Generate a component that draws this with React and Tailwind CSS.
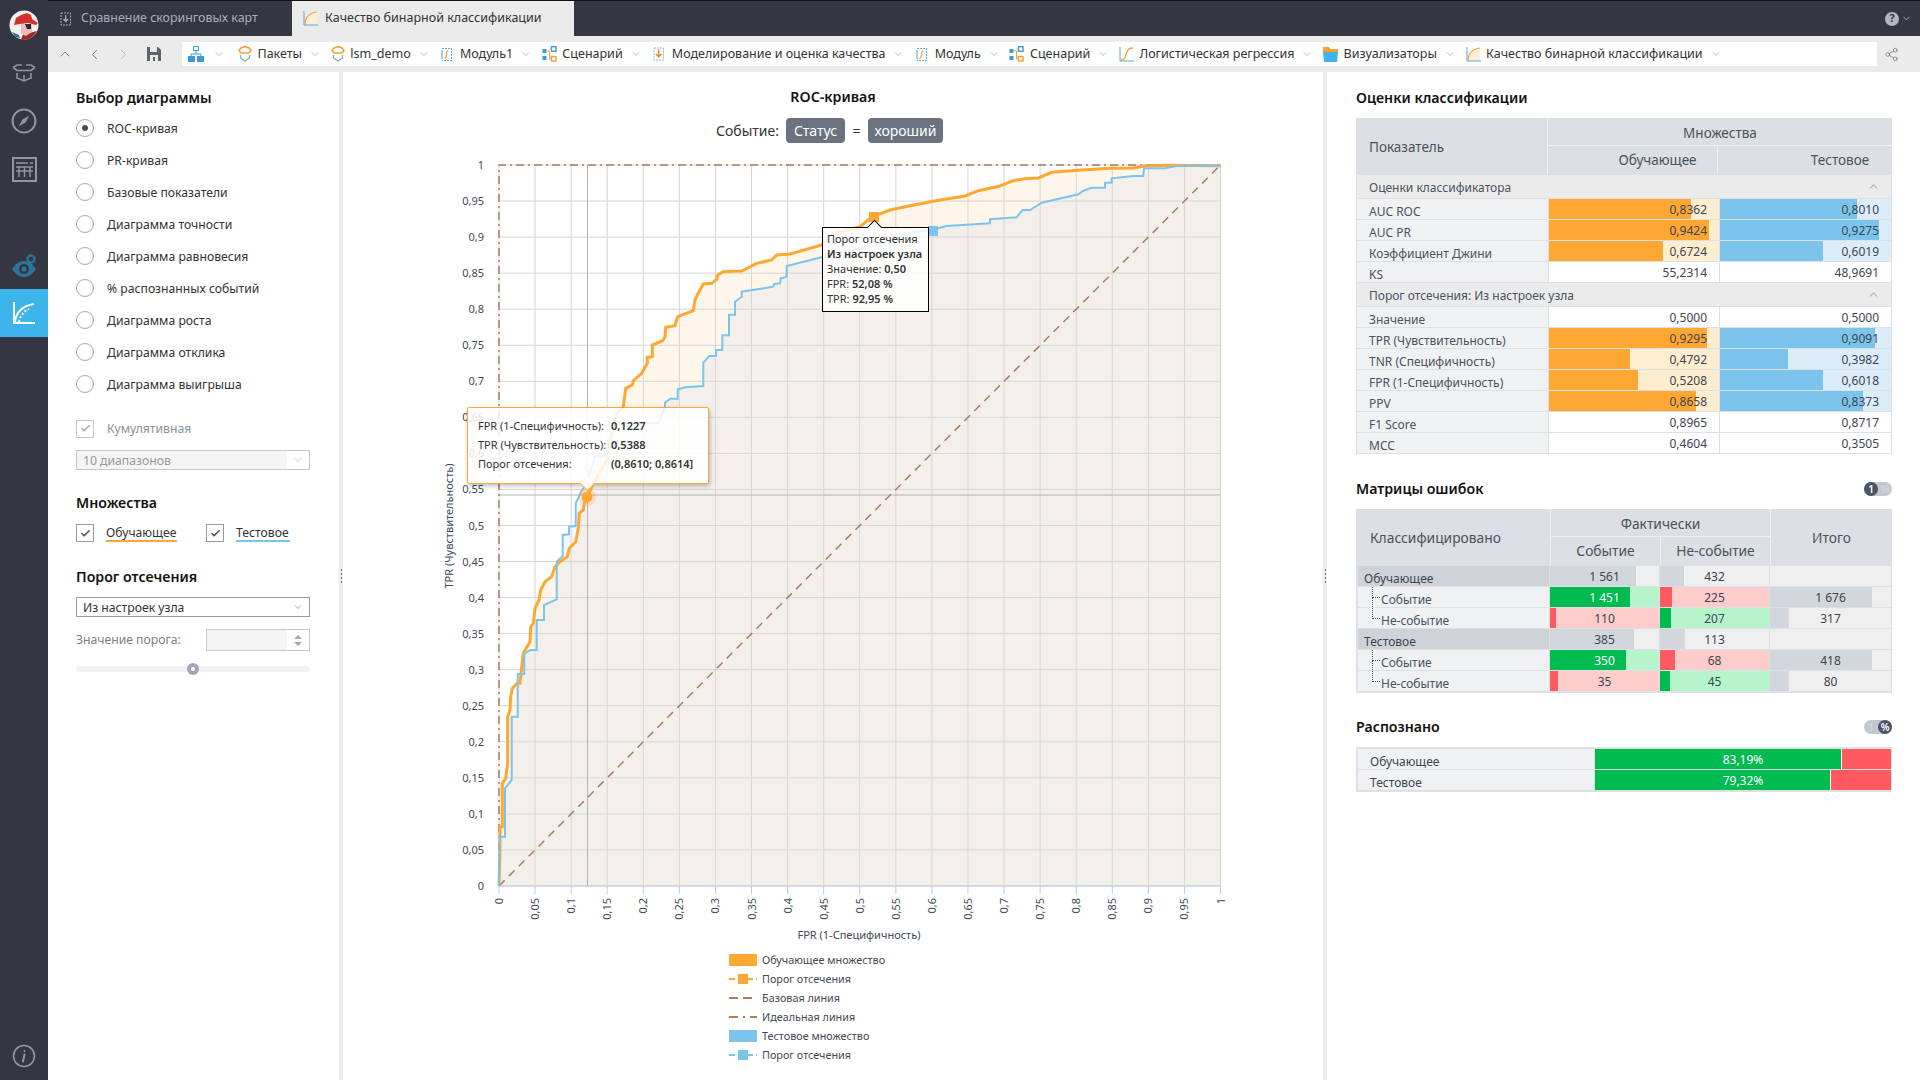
import { ChevronDown, ChevronUp, ChevronLeft, ChevronRight, Share2, Check } from "lucide-react";

const CHARTS = ["ROC-кривая", "PR-кривая", "Базовые показатели", "Диаграмма точности", "Диаграмма равновесия", "% распознанных событий", "Диаграмма роста", "Диаграмма отклика", "Диаграмма выигрыша"];

const px = (v) => 499 + 721.5 * v;
const py = (v) => 886 - 721 * v;

// curves were read off the picture in zoomed coordinates
const fromLow = (p) => p.map(([x, y]) => [440 + x / 3, 400 + y / 3]);
const fromMid = (p) => p.map(([x, y]) => [440 + x / 3, 140 + y / 3]);
const fromTop = (p) => p.map(([x, y]) => [800 + x / 3, 140 + y / 3]);

const orangeCurve = [
  ...fromLow([[177, 1458], [180, 1350], [180, 1280], [187, 1280], [187, 1150], [197, 1135], [203, 1090], [203, 950], [210, 930], [212, 890], [217, 865], [232, 850], [240, 850], [250, 760], [270, 725], [272, 680], [280, 670], [285, 625], [297, 600], [302, 570], [315, 545], [335, 530], [345, 500], [360, 485], [382, 470], [388, 445], [407, 425], [415, 385], [418, 340], [430, 330], [433, 310], [440, 290], [458, 255]]),
  ...fromMid([[500, 960], [515, 880], [530, 820], [550, 800], [557, 745], [577, 735], [580, 722], [605, 700], [622, 670], [622, 652], [637, 650], [637, 615], [668, 602], [675, 590], [677, 562], [705, 557], [713, 530], [760, 512], [765, 480], [772, 465], [790, 432], [815, 430], [830, 418], [833, 405], [850, 395], [905, 393], [950, 370], [995, 360], [1010, 345], [1050, 342], [1145, 315], [1180, 280], [1260, 260], [1290, 235]]),
  ...fromTop([[222, 228], [270, 210], [330, 197], [420, 180], [495, 168], [535, 152], [600, 138], [640, 122], [675, 116], [715, 114], [755, 97], [845, 90], [930, 85], [1000, 84], [1035, 78], [1100, 76], [1262, 77]]),
];

const blueCurve = [
  ...fromLow([[177, 1458], [180, 1310], [195, 1310], [195, 1165], [215, 1140], [215, 950], [233, 950], [233, 822], [253, 822], [253, 760], [272, 750], [290, 750], [290, 660], [312, 660], [312, 615], [350, 598], [350, 485], [368, 468], [368, 405], [387, 403], [387, 380], [407, 378], [407, 310], [425, 272]]),
  ...fromMid([[440, 1030], [465, 950], [500, 945], [510, 890], [525, 850], [655, 850], [675, 800], [675, 788], [690, 776], [713, 776], [713, 748], [735, 742], [790, 738], [790, 668], [808, 648], [828, 648], [828, 630], [847, 630], [847, 586], [867, 586], [867, 524], [885, 524], [885, 485], [905, 470], [905, 455], [1000, 440], [1003, 432], [1020, 430], [1022, 415], [1040, 410], [1040, 378], [1150, 350], [1210, 335], [1330, 310], [1420, 275], [1475, 270]]),
  ...fromTop([[415, 265], [438, 258], [570, 250], [570, 238], [610, 235], [650, 232], [668, 210], [690, 210], [725, 188], [835, 163], [850, 152], [875, 143], [915, 143], [915, 128], [935, 128], [935, 115], [1000, 108], [1030, 108], [1032, 85], [1095, 85], [1130, 78], [1262, 77]]),
];

const toPoints = (p) => p.map(([x, y]) => `${x.toFixed(1)},${y.toFixed(1)}`).join(" ");
const tickLabel = (i) => String(Number((i * 0.05).toFixed(2))).replace(".", ",");
const ticks = Array.from({ length: 21 }, (_, i) => i);

function ItemIcon({ type }) {
  if (type === "tree") {
    return (
      <svg width="16" height="16" viewBox="0 0 16 16" className="shrink-0">
        <rect x="5.500" y="0.500" width="5" height="4" fill="#fff" stroke="#3a9bd9" />
        <path d="M8 5v3M3 8h10M3 8v2M13 8v2" stroke="#3a9bd9" fill="none" />
        <rect x="0" y="10" width="7" height="6" fill="#3a9bd9" />
        <rect x="9" y="10" width="7" height="6" fill="#3a9bd9" />
      </svg>
    );
  }
  if (type === "pkg") {
    return (
      <svg width="14" height="16" viewBox="0 0 14 16" className="shrink-0" fill="none">
        <path d="M3 2l4-1.500L11 2l2 2.500L11 7H3L1 4.500z" stroke="#f5a033" strokeWidth="1.600" />
        <path d="M2.500 9v3l4.500 3 4.500-3V9" stroke="#7fa8c9" strokeWidth="1.200" />
      </svg>
    );
  }
  if (type === "func") {
    return (
      <svg width="15" height="15" viewBox="0 0 15 15" className="shrink-0" fill="none">
        <path d="M3 1.500h9.500v12H3" stroke="#5aa9dc" strokeWidth="1.100" strokeDasharray="2 1" />
        <path d="M3 3v9" stroke="#5aa9dc" strokeWidth="1.100" />
        <path d="M9.500 4C8 3.500 7.800 5 7.500 7.500S6.500 11.500 5.500 11" stroke="#f5a033" strokeWidth="1.200" />
      </svg>
    );
  }
  if (type === "flow") {
    return (
      <svg width="15" height="16" viewBox="0 0 15 16" className="shrink-0" fill="none">
        <rect x="0.500" y="3" width="4" height="4" fill="#3a9bd9" />
        <rect x="0.500" y="10" width="4" height="4" fill="#3a9bd9" />
        <rect x="9.500" y="0.700" width="4.500" height="4.500" stroke="#3a9bd9" strokeWidth="1.400" />
        <rect x="9.500" y="10.500" width="4.500" height="4.500" stroke="#f5a033" strokeWidth="1.400" />
        <path d="M4.500 5h3v8h2M7.500 3h2" stroke="#f5a033" />
      </svg>
    );
  }
  if (type === "model") {
    return (
      <svg width="15" height="16" viewBox="0 0 15 16" className="shrink-0" fill="none">
        <path d="M3 2h9.500v12H3z" stroke="#8bb8d8" strokeDasharray="2 1" />
        <path d="M7.700 3.500v7M5 8l2.700 3L10.500 8" stroke="#f08a1d" strokeWidth="1.500" />
      </svg>
    );
  }
  if (type === "logit") {
    return (
      <svg width="15" height="15" viewBox="0 0 15 15" className="shrink-0" fill="none">
        <path d="M1 0v14h14" stroke="#5aa9dc" />
        <path d="M2 13c4 0 4-3 5.500-7S10 1 14 1" stroke="#f5a033" strokeWidth="1.300" />
      </svg>
    );
  }
  if (type === "folder") {
    return (
      <svg width="15" height="15" viewBox="0 0 15 15" className="shrink-0">
        <path d="M0 0h6l1.500 2H15v3H0z" fill="#f5a033" />
        <path d="M0 5h15l-1 10H1z" fill="#3db4ea" />
      </svg>
    );
  }
  return (
    <svg width="15" height="15" viewBox="0 0 15 15" className="shrink-0" fill="none">
      <path d="M2 14C2 7 6 2 14 1v13z" fill="#fdeed8" />
      <path d="M1 0v14h14" stroke="#5aa9dc" />
      <path d="M2 14C2 7 6 2 14 1" stroke="#f5a033" strokeWidth="1.200" />
    </svg>
  );
}

const CRUMBS = [
  ["pkg", "Пакеты"],
  ["pkg", "lsm_demo"],
  ["func", "Модуль1"],
  ["flow", "Сценарий"],
  ["model", "Моделирование и оценка качества"],
  ["func", "Модуль"],
  ["flow", "Сценарий"],
  ["logit", "Логистическая регрессия"],
  ["folder", "Визуализаторы"],
  ["roc", "Качество бинарной классификации"],
];

function Sidebar() {
  return (
    <div className="w-12 shrink-0 bg-[#343642] flex flex-col items-center relative">
      <svg width="30" height="30" viewBox="0 0 30 30" className="mt-[10px]">
        <circle cx="15" cy="15" r="14.500" fill="#f4f1ee" />
        <path d="M12 29.500l2-5 14-3.500a14.500 14.500 0 0 1-16 8.500z" fill="#a8232b" />
        <path d="M12 14h11v8l-6 4-5-2z" fill="#f0bcb8" />
        <path d="M16 14h6v5h-4z" fill="#2b2b33" />
        <path d="M5 15l2-7 5-3 6-2 4 2 1 4 6 4-2 2-8-2-8 1z" fill="#d42f2f" />
        <path d="M3 22l7 3 1 3-5-1z" fill="#3c6f8c" />
      </svg>
      <svg width="24" height="18" viewBox="0 0 24 18" fill="none" stroke="#8f95a3" strokeWidth="1.600" className="mt-[24px]">
        <path d="M1 3.500l4-2.500h5M23 3.500l-4-2.500h-5M1 3.500L5 6.500h14l4-3" />
        <path d="M5 9v5l7 3 7-3V9M12 11v6" />
      </svg>
      <svg width="26" height="26" viewBox="0 0 26 26" fill="none" className="mt-[26px]">
        <circle cx="13" cy="13" r="11.500" stroke="#8f95a3" strokeWidth="2" />
        <path d="M18.500 7.500L14.500 14.500 7.500 18.500 11.500 11.500z" fill="#8f95a3" />
      </svg>
      <svg width="25" height="25" viewBox="0 0 25 25" fill="none" stroke="#8f95a3" className="mt-[23px]">
        <rect x="1" y="1" width="23" height="23" strokeWidth="2" />
        <path d="M4 6h17" strokeWidth="1.500" strokeDasharray="12 2 3" />
        <path d="M4 10h17M7 10v10M12.500 10v10M18 10v10M4 14h17" strokeWidth="1.500" />
      </svg>
      <svg width="26" height="24" viewBox="0 0 26 24" className="mt-[72px]">
        <path d="M1 15c3-5 7-8 12-8s9 3 12 8c-3 5-7 8-12 8S4 20 1 15z" fill="#2f7299" />
        <circle cx="13" cy="15" r="5" fill="#343642" />
        <circle cx="13" cy="15" r="2.500" fill="#2f7299" />
        <circle cx="20" cy="5" r="3.500" fill="none" stroke="#2f7299" strokeWidth="2.500" />
      </svg>
      <div className="mt-[11px] w-12 h-12 bg-[#3db4ea] flex items-center justify-center">
        <svg width="22" height="22" viewBox="0 0 22 22" fill="none" stroke="#fff">
          <path d="M1 0v21h21" strokeWidth="2" />
          <path d="M2 20C3 11 9 4 21 2" strokeWidth="2" />
          <path d="M6 20C7 14 11 9 16 7" strokeWidth="2" strokeDasharray="2 2" />
        </svg>
      </div>
      <svg width="24" height="24" viewBox="0 0 24 24" fill="none" className="absolute bottom-[12px] left-3">
        <circle cx="12" cy="12" r="10.500" stroke="#8f95a3" strokeWidth="1.600" />
        <path d="M12.500 7v.1M12.500 10.500L11 17.500" stroke="#8f95a3" strokeWidth="2" strokeLinecap="round" />
      </svg>
    </div>
  );
}

function TopBars() {
  return (
    <div className="shrink-0">
      <div className="h-9 bg-[#343642] flex border-t border-[#111]">
        <div className="w-[244px] flex items-center pl-[10px] text-[#a9aeb9] text-[12.400px]">
          <svg width="15" height="16" viewBox="0 0 15 16" fill="none" stroke="#a9aeb9" className="mr-2">
            <path d="M3 2h9.500v12H3z" strokeDasharray="2 1" />
            <path d="M7.700 4v6M5.500 8l2.200 2.500L10 8" strokeWidth="1.300" />
          </svg>
          Сравнение скоринговых карт
        </div>
        <div className="w-[282px] bg-[#ebebeb] flex items-center pl-[11px] text-[#333] text-[12.500px]">
          <span className="mr-[7px] flex"><ItemIcon type="roc" /></span>
          Качество бинарной классификации
        </div>
        <div className="flex-1 flex items-center justify-end pr-2 gap-[2px]">
          <div className="w-[14px] h-[14px] rounded-full bg-[#b3b7c0] text-[#343642] text-[11px] font-bold flex items-center justify-center">?</div>
          <ChevronDown size={11} className="text-[#b3b7c0]" />
        </div>
      </div>
      <div className="h-9 bg-[#ebebeb] flex items-center">
        <div className="w-[134px] flex items-center text-[#777] pl-[9px]">
          <ChevronUp size={16} strokeWidth={1.300} />
          <ChevronLeft size={17} strokeWidth={1.300} className="ml-[13px]" />
          <ChevronRight size={17} strokeWidth={1.300} className="ml-[12px] text-[#b5b8bd]" />
          <svg width="14" height="14" viewBox="0 0 14 14" className="ml-[15px]">
            <path d="M0 0h11l3 3v11H0z" fill="#5d6470" />
            <rect x="3" y="0" width="7" height="5" fill="#ebebeb" />
            <rect x="3" y="8" width="8" height="6" fill="#ebebeb" />
            <rect x="6" y="10" width="2" height="4" fill="#5d6470" />
          </svg>
        </div>
        <div className="w-[1695px] h-6 bg-white flex items-center pl-[6px] text-[12.500px] text-[#333]">
          <ItemIcon type="tree" />
          <ChevronDown size={12} strokeWidth={1.200} className="ml-[9px] mr-[13px] text-[#8a8f99]" />
          {CRUMBS.map(([icon, name], i) => (
            <div key={i} className="flex items-center whitespace-nowrap">
              <ItemIcon type={icon} />
              <span className="ml-[5.500px] pt-px">{name}</span>
              <ChevronDown size={12} strokeWidth={1.200} className="ml-[7px] mr-[9.700px] text-[#8a8f99]" />
            </div>
          ))}
        </div>
        <Share2 size={15} strokeWidth={1.200} className="ml-[7px] text-[#777]" />
      </div>
    </div>
  );
}

function Heading({ children, className = "" }) {
  return <div className={"h-5 flex items-center text-[14.200px] font-semibold text-[#111] " + className}>{children}</div>;
}

function CheckBox({ muted }) {
  return (
    <div className={"w-[18px] h-[18px] border flex items-center justify-center shrink-0 " + (muted ? "border-[#c8c8c8]" : "border-[#9b9b9b]")}>
      <Check size={11} strokeWidth={3.500} className={muted ? "text-[#a9a9a9]" : "text-[#555]"} />
    </div>
  );
}

function LeftPanel() {
  return (
    <div className="w-[291px] shrink-0 bg-white px-7 pt-4">
      <Heading>Выбор диаграммы</Heading>
      <div className="mt-1 flex flex-col">
        {CHARTS.map((name, i) => (
          <div key={name} className="h-8 flex items-center text-[12.200px] text-[#333]">
            <div className="w-[18px] h-[18px] rounded-full border border-[#a8a8a8] flex items-center justify-center mr-[13px]">
              {i === 0 && <div className="w-[6px] h-[6px] rounded-full bg-[#4a4f5a]" />}
            </div>
            <span className="pt-[3px]">{name}</span>
          </div>
        ))}
      </div>
      <div className="mt-[19px] flex items-center text-[12.200px] text-[#8a8f99]">
        <CheckBox muted />
        <span className="ml-[13px] pt-px">Кумулятивная</span>
      </div>
      <div className="mt-[12px] w-[234px] h-5 border border-[#c8c8c8] flex text-[12.200px] text-[#999]">
        <div className="flex-1 bg-[#f5f5f5] pl-[6px] flex items-center pt-[2px]">10 диапазонов</div>
        <div className="w-[22px] flex items-center justify-center"><ChevronDown size={12} strokeWidth={1.200} className="text-[#aaa]" /></div>
      </div>
      <Heading className="mt-[22px]">Множества</Heading>
      <div className="mt-3 flex text-[12.200px] text-[#333]">
        <CheckBox />
        <span className="ml-3 w-[71px] h-[18px] border-b-2 border-[#ffa733] leading-[17px] whitespace-nowrap">Обучающее</span>
        <div className="ml-[29px]"><CheckBox /></div>
        <span className="ml-3 w-[54px] h-[18px] border-b-2 border-[#7cc4ec] leading-[17px] whitespace-nowrap">Тестовое</span>
      </div>
      <Heading className="mt-[24px]">Порог отсечения</Heading>
      <div className="mt-[11px] w-[234px] h-5 border border-[#9b9b9b] flex text-[12.200px] text-[#333]">
        <div className="flex-1 pl-[6px] flex items-center pt-[2px]">Из настроек узла</div>
        <div className="w-[22px] flex items-center justify-center"><ChevronDown size={12} strokeWidth={1.200} className="text-[#777]" /></div>
      </div>
      <div className="mt-3 flex items-center text-[12.200px] text-[#7b808a]">
        <span className="w-[130px]">Значение порога:</span>
        <div className="w-[104px] h-[22px] border border-[#c8c8c8] flex">
          <div className="flex-1 bg-[#f5f5f5]" />
          <div className="w-[22px] flex flex-col items-center justify-center gap-[3px]">
            <div className="w-0 h-0 border-x-[4px] border-x-transparent border-b-[4px] border-b-[#aaa]" />
            <div className="w-0 h-0 border-x-[4px] border-x-transparent border-t-[4px] border-t-[#aaa]" />
          </div>
        </div>
      </div>
      <div className="mt-[15px] w-[234px] h-[6px] rounded-full bg-[#f2f2f2] flex items-center justify-center">
        <div className="w-3 h-3 rounded-full bg-[#9ea7b3] flex items-center justify-center">
          <div className="w-1 h-1 rounded-full bg-white" />
        </div>
      </div>
    </div>
  );
}

function Gutter() {
  return (
    <div className="w-1 shrink-0 flex flex-col items-center justify-center gap-[2px]">
      <div className="w-[1px] h-[2px] bg-[#777]" />
      <div className="w-[1px] h-[2px] bg-[#777]" />
      <div className="w-[1px] h-[2px] bg-[#777]" />
      <div className="w-[1px] h-[2px] bg-[#777]" />
    </div>
  );
}

function Chart() {
  const left = px(0);
  const right = px(1);
  const top = py(1);
  const bottom = py(0);
  const closed = (p) => toPoints([...p, [right, bottom], [left, bottom]]);
  const legendY = [960, 979, 998, 1017, 1036, 1055];
  const legendText = ["Обучающее множество", "Порог отсечения", "Базовая линия", "Идеальная линия", "Тестовое множество", "Порог отсечения"];

  return (
    <svg width="980" height="930" viewBox="343 150 980 930" className="block">
      <polygon points={closed(orangeCurve)} fill="#ffa733" fillOpacity="0.1" />
      <polygon points={closed(blueCurve)} fill="#87baf4" fillOpacity="0.1" />
      {ticks.map((i) => (
        <g key={i}>
          <line x1={left} x2={right} y1={py(i * 0.05)} y2={py(i * 0.05)} stroke="#d8d6d3" />
          <line x1={px(i * 0.05)} x2={px(i * 0.05)} y1={top} y2={bottom} stroke="#d8d6d3" />
          <line x1={px(i * 0.05)} x2={px(i * 0.05)} y1={bottom} y2={bottom + 8} stroke="#b7cfe6" />
          <text x={484} y={py(i * 0.05) + 4} textAnchor="end" fontSize="11" fill="#3f4a55">{tickLabel(i)}</text>
          <text transform={`translate(${px(i * 0.05) + 4} 898) rotate(-90)`} textAnchor="end" fontSize="11" fill="#3f4a55">{tickLabel(i)}</text>
        </g>
      ))}
      <line x1={left} x2={right} y1={bottom} y2={bottom} stroke="#b7cfe6" />
      <line x1={px(0.1227)} x2={px(0.1227)} y1={top} y2={bottom} stroke="#b3b3b3" />
      <line x1={left} x2={right} y1={495} y2={495} stroke="#b3b3b3" />
      <line x1={left} x2={right} y1={bottom} y2={top} stroke="#ab7b62" strokeWidth="1.500" strokeDasharray="8 6" />
      <path d={`M${left} ${bottom}V${top}H${right}`} fill="none" stroke="#ab7b62" strokeWidth="1.500" strokeDasharray="8 4 2 4" />
      <polyline points={toPoints(orangeCurve)} fill="none" stroke="#ffa733" strokeWidth="3" />
      <polyline points={toPoints(blueCurve)} fill="none" stroke="#7cc4ec" strokeWidth="2" />
      <rect x="869" y="212" width="10" height="10" fill="#ffa733" />
      <rect x="928" y="226" width="10" height="10" fill="#7cc4ec" />
      <circle cx="587" cy="497" r="9" fill="#ffa733" fillOpacity="0.25" />
      <circle cx="587" cy="497" r="5.500" fill="#ffa733" />
      <text transform="translate(453 526) rotate(-90)" textAnchor="middle" fontSize="11" fill="#3f4a55">TPR (Чувствительность)</text>
      <text x="859" y="939" textAnchor="middle" fontSize="11" fill="#3f4a55">FPR (1-Специфичность)</text>
      {legendText.map((t, i) => (
        <text key={i} x="762" y={legendY[i] + 4} fontSize="10.800" fill="#3f4a55">{t}</text>
      ))}
      <rect x="729" y="954" width="28" height="12" fill="#ffa733" />
      <line x1="729" x2="757" y1="979" y2="979" stroke="#ffa733" strokeWidth="2" strokeDasharray="6 3" />
      <rect x="738" y="974" width="10" height="10" fill="#ffa733" />
      <line x1="729" x2="757" y1="998" y2="998" stroke="#b07a5c" strokeWidth="2" strokeDasharray="9 5" />
      <line x1="729" x2="757" y1="1017" y2="1017" stroke="#b07a5c" strokeWidth="2" strokeDasharray="9 5 2 5" />
      <rect x="729" y="1030" width="28" height="12" fill="#7cc4ec" />
      <line x1="729" x2="757" y1="1055" y2="1055" stroke="#7cc4ec" strokeWidth="2" strokeDasharray="6 3" />
      <rect x="738" y="1050" width="10" height="10" fill="#7cc4ec" />
    </svg>
  );
}

function CenterPanel() {
  return (
    <div className="w-[980px] shrink-0 bg-white pt-[15px] overflow-hidden">
      <Heading className="justify-center">ROC-кривая</Heading>
      <div className="mt-[11px] h-[25px] flex items-center text-[14px] text-[#333] pl-[373px]">
        <span className="w-[70px]">Событие:</span>
        <span className="w-[59px] h-[25px] bg-[#6c7380] text-white rounded-sm flex items-center justify-center">Статус</span>
        <span className="w-[23px] text-center">=</span>
        <span className="w-[75px] h-[25px] bg-[#6c7380] text-white rounded-sm flex items-center justify-center">хороший</span>
      </div>
      <div className="mt-[7px] relative">
        <Chart />
        <div className="absolute left-[124px] top-[257px] w-[242px] h-[77px] bg-white/85 border-[1.500px] border-[#ffa733] shadow-[1px_2px_4px_rgba(0,0,0,0.25)] rounded-[2px] px-[10px] pt-[8px] text-[11px] text-[#333] leading-[19px] whitespace-nowrap">
          <div className="flex"><span className="w-[133px]">FPR (1-Специфичность):</span><b className="font-semibold">0,1227</b></div>
          <div className="flex"><span className="w-[133px]">TPR (Чувствительность):</span><b className="font-semibold">0,5388</b></div>
          <div className="flex"><span className="w-[133px]">Порог отсечения:</span><b className="font-semibold">(0,8610; 0,8614]</b></div>
          <div className="absolute left-[114px] -bottom-[6px] w-[11px] h-[11px] rotate-45 bg-white border-r-[1.500px] border-b-[1.500px] border-[#ffa733]" />
        </div>
        <div className="absolute left-[479px] top-[77px] w-[107px] h-[85px] bg-white/85 border border-black px-[4px] pt-[3px] text-[11px] text-[#333] leading-[15px] whitespace-nowrap">
          <div>Порог отсечения</div>
          <div className="font-semibold">Из настроек узла</div>
          <div>Значение: <b className="font-semibold">0,50</b></div>
          <div>FPR: <b className="font-semibold">52,08 %</b></div>
          <div>TPR: <b className="font-semibold">92,95 %</b></div>
          <div className="absolute left-[46px] -top-[6px] w-[11px] h-[11px] rotate-45 bg-white border-l border-t border-black" />
        </div>
      </div>
    </div>
  );
}

const ORANGE = ["#ffa733", "#ffedd0"];
const BLUE = ["#7cc4ec", "#dcedfa"];

function ValueCell({ value, bar, colors }) {
  return (
    <div className="relative h-5 text-right pr-[12px] leading-[21px]" style={{ backgroundColor: bar != null ? colors[1] : "#fff" }}>
      {bar != null && <div className="absolute left-0 top-0 bottom-0" style={{ width: `${bar * 100}%`, backgroundColor: colors[0] }} />}
      <span className="relative">{value}</span>
    </div>
  );
}

const SCORES = [
  { section: "Оценки классификатора" },
  { name: "AUC ROC", a: "0,8362", b: "0,8010", ab: 0.8362, bb: 0.801 },
  { name: "AUC PR", a: "0,9424", b: "0,9275", ab: 0.9424, bb: 0.9275 },
  { name: "Коэффициент Джини", a: "0,6724", b: "0,6019", ab: 0.6724, bb: 0.6019 },
  { name: "KS", a: "55,2314", b: "48,9691" },
  { section: "Порог отсечения: Из настроек узла" },
  { name: "Значение", a: "0,5000", b: "0,5000" },
  { name: "TPR (Чувствительность)", a: "0,9295", b: "0,9091", ab: 0.9295, bb: 0.9091 },
  { name: "TNR (Специфичность)", a: "0,4792", b: "0,3982", ab: 0.4792, bb: 0.3982 },
  { name: "FPR (1-Специфичность)", a: "0,5208", b: "0,6018", ab: 0.5208, bb: 0.6018 },
  { name: "PPV", a: "0,8658", b: "0,8373", ab: 0.8658, bb: 0.8373 },
  { name: "F1 Score", a: "0,8965", b: "0,8717" },
  { name: "MCC", a: "0,4604", b: "0,3505" },
];

function ScoresTable() {
  return (
    <div className="w-[536px] text-[12px] text-[#4a5360]">
      <div className="grid grid-cols-[192px_170px_174px] grid-rows-[28px_28px] bg-[#dcdfe3] h-[56px] text-[13.500px]">
        <div className="row-span-2 flex items-center pl-[13px] border-r border-[#eef0f2] pt-[2px]">Показатель</div>
        <div className="col-span-2 flex items-center justify-center border-b border-[#eef0f2] pt-[4px]">Множества</div>
        <div className="flex items-center justify-center border-r border-[#eef0f2] pl-[50px] pt-px">Обучающее</div>
        <div className="flex items-center justify-center pl-[70px] pt-px">Тестовое</div>
      </div>
      <div className="bg-[#dde0e4] flex flex-col gap-px p-px">
        {SCORES.map((r) =>
          r.section ? (
            <div key={r.section} className="h-[23px] bg-[#ebebeb] flex items-center pl-3 pr-[11px] justify-between pt-[2px]">
              {r.section}
              <ChevronUp size={13} strokeWidth={1.200} className="text-[#666] -mt-[2px]" />
            </div>
          ) : (
            <div key={r.name} className="grid grid-cols-[191px_170px_171px] grid-rows-[20px] gap-px h-5 text-[#3d4550]">
              <div className="bg-[#f0f1f3] pl-3 pt-[5px] leading-[15px] text-[#4a5360]">{r.name}</div>
              <ValueCell value={r.a} bar={r.ab} colors={ORANGE} />
              <ValueCell value={r.b} bar={r.bb} colors={BLUE} />
            </div>
          )
        )}
      </div>
    </div>
  );
}

function MatrixCell({ value, bar, dark, light, invert }) {
  return (
    <div className="relative h-5 text-center leading-[21px]" style={{ backgroundColor: light }}>
      {bar != null && <div className="absolute left-0 top-0 bottom-0" style={{ width: `${bar * 100}%`, backgroundColor: dark }} />}
      <span className={"relative" + (invert ? " text-white" : "")}>{value}</span>
    </div>
  );
}

const GREEN = "#00bb4f";
const GREEN_L = "#b6f5cb";
const RED = "#ff5a60";
const RED_L = "#ffcccc";
const GREY = "#d2d7de";
const GREY_L = "#efefef";

function TreeMark({ last }) {
  return (
    <div className="w-[8px] h-full flex flex-col ml-[14px] mr-[1px] shrink-0">
      <div className="h-[11px] border-l border-b border-dotted border-[#555]" />
      {!last && <div className="flex-1 border-l border-dotted border-[#555]" />}
    </div>
  );
}

const MATRIX = [
  { title: "Обучающее", top: ["1 561", 0.79, "432", 0.22] },
  { name: "Событие", c1: ["1 451", 0.73, GREEN, GREEN_L, true], c2: ["225", 0.11, RED, RED_L], t: ["1 676", 0.84] },
  { name: "Не-событие", last: true, c1: ["110", 0.055, RED, RED_L], c2: ["207", 0.105, GREEN, GREEN_L], t: ["317", 0.16] },
  { title: "Тестовое", top: ["385", 0.77, "113", 0.23] },
  { name: "Событие", c1: ["350", 0.7, GREEN, GREEN_L, true], c2: ["68", 0.136, RED, RED_L], t: ["418", 0.84] },
  { name: "Не-событие", last: true, c1: ["35", 0.07, RED, RED_L], c2: ["45", 0.09, GREEN, GREEN_L], t: ["80", 0.16] },
];

function MatrixTable() {
  return (
    <div className="w-[536px] text-[12px] text-[#4a5360]">
      <div className="grid grid-cols-[193px_110px_110px_121px] grid-rows-[28px_28px] h-[56px] bg-[#dcdfe3] pl-[2px] text-[13.800px]">
        <div className="row-span-2 flex items-center pl-3 border-r border-[#eef0f2] pt-[2px]">Классифицировано</div>
        <div className="col-span-2 flex items-center justify-center border-r border-b border-[#eef0f2] pt-[3px]">Фактически</div>
        <div className="row-span-2 flex items-center justify-center pt-[2px]">Итого</div>
        <div className="flex items-center justify-center border-r border-[#eef0f2]">Событие</div>
        <div className="flex items-center justify-center border-r border-[#eef0f2]">Не-событие</div>
      </div>
      <div className="bg-[#dde0e4] flex flex-col gap-px pt-px pl-[2px] pr-px pb-[2px]">
        {MATRIX.map((r, i) =>
          r.title ? (
            <div key={i} className="grid grid-cols-[191px_109px_109px_121px] grid-rows-[20px] gap-px h-5 text-[#3d4550]">
              <div className="bg-[#ced3da] pl-[6px] pt-[5px] leading-[15px] overflow-hidden">{r.title}</div>
              <MatrixCell value={r.top[0]} bar={r.top[1]} dark={GREY} light={GREY_L} />
              <MatrixCell value={r.top[2]} bar={r.top[3]} dark={GREY} light={GREY_L} />
              <div className="bg-[#efefef]" />
            </div>
          ) : (
            <div key={i} className="grid grid-cols-[191px_109px_109px_121px] grid-rows-[20px] gap-px h-5 text-[#3d4550]">
              <div className="bg-[#f0f1f3] h-5 flex items-start leading-[25px] text-[#4a5360] overflow-hidden">
                <TreeMark last={r.last} />
                {r.name}
              </div>
              <MatrixCell value={r.c1[0]} bar={r.c1[1]} dark={r.c1[2]} light={r.c1[3]} invert={r.c1[4]} />
              <MatrixCell value={r.c2[0]} bar={r.c2[1]} dark={r.c2[2]} light={r.c2[3]} />
              <MatrixCell value={r.t[0]} bar={r.t[1]} dark={GREY} light={GREY_L} />
            </div>
          )
        )}
      </div>
    </div>
  );
}

function Toggle({ right }) {
  return (
    <div className="w-[28px] h-[14px] rounded-full bg-[#c2c7d0] flex items-center justify-between text-[10px] text-[#d5d8de] leading-none">
      <span className={"w-[14px] h-[14px] rounded-full flex items-center justify-center font-semibold " + (right ? "" : "bg-[#4a5568] text-white")}>1</span>
      <span className={"w-[14px] h-[14px] rounded-full flex items-center justify-center font-semibold " + (right ? "bg-[#4a5568] text-white" : "")}>%</span>
    </div>
  );
}

function RecognizedTable() {
  const rows = [["Обучающее", "83,19%", 83.19], ["Тестовое", "79,32%", 79.32]];
  return (
    <div className="w-[536px] bg-[#dde0e4] pt-[2px] pl-[2px] pr-px pb-[2px] flex flex-col gap-px text-[12px]">
      {rows.map(([name, text, pct]) => (
        <div key={name} className="flex h-5 gap-px">
          <div className="w-[236px] bg-[#f0f1f3] pl-3 pt-[5px] leading-[15px] text-[#3d4550]">{name}</div>
          <div className="flex-1 bg-white flex gap-px relative">
            <div className="bg-[#00bb4f]" style={{ width: `${pct}%` }} />
            <div className="flex-1 bg-[#ff5a60]" />
            <span className="absolute inset-0 text-center text-white leading-[21px]">{text}</span>
          </div>
        </div>
      ))}
    </div>
  );
}

function RightPanel() {
  return (
    <div className="flex-1 bg-white pl-[29px] pt-4">
      <Heading>Оценки классификации</Heading>
      <div className="mt-[10px]"><ScoresTable /></div>
      <div className="mt-[25px] w-[536px] flex items-center justify-between">
        <Heading>Матрицы ошибок</Heading>
        <Toggle />
      </div>
      <div className="mt-[10px]"><MatrixTable /></div>
      <div className="mt-6 w-[536px] flex items-center justify-between">
        <Heading>Распознано</Heading>
        <Toggle right />
      </div>
      <div className="mt-[10px]"><RecognizedTable /></div>
    </div>
  );
}

export default function App() {
  return (
    <div className="w-[1920px] h-[1080px] flex overflow-hidden bg-[#ebebeb] font-['Noto_Sans',sans-serif]">
      <Sidebar />
      <div className="flex-1 flex flex-col min-w-0">
        <TopBars />
        <div className="flex-1 flex min-h-0">
          <LeftPanel />
          <Gutter />
          <CenterPanel />
          <Gutter />
          <RightPanel />
        </div>
      </div>
    </div>
  );
}
